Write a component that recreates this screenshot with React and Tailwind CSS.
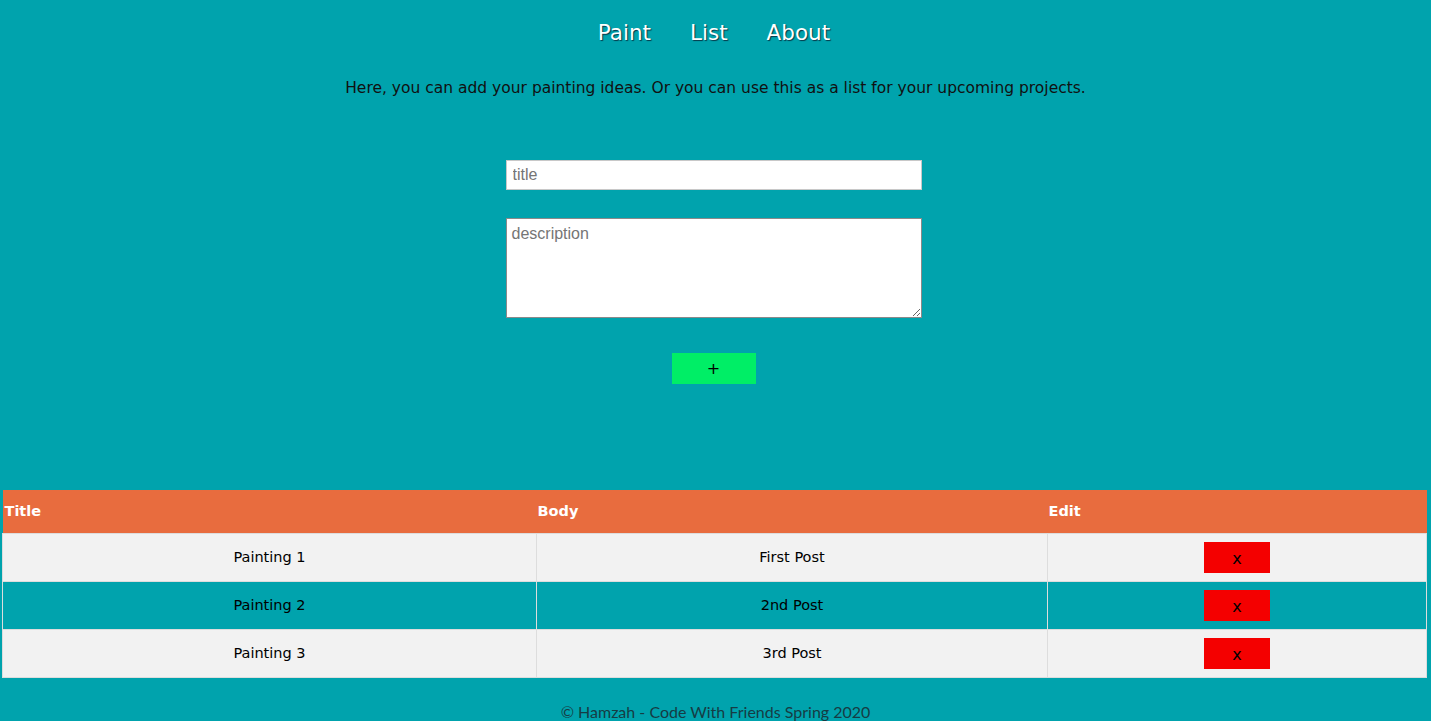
import { useState } from 'react'

const rows = [
  { title: 'Painting 1', body: 'First Post' },
  { title: 'Painting 2', body: '2nd Post' },
  { title: 'Painting 3', body: '3rd Post' },
]

export default function App() {
  const [title, setTitle] = useState('')
  const [description, setDescription] = useState('')

  return (
    <div className="min-h-[721px] bg-[#00a3ad] font-['DejaVu_Sans',sans-serif] text-black">
      <nav className="flex justify-center gap-[39px] pt-[18px] pr-[3px] text-[21.5px] text-white [text-shadow:1px_1px_1px_#063848]">
        <a href="#" className="leading-[30px]">Paint</a>
        <a href="#" className="leading-[30px]">List</a>
        <a href="#" className="leading-[30px]">About</a>
      </nav>

      <p className="mt-[29px] text-center text-[15.5px] leading-[22px] text-[#111]">
        Here, you can add your painting ideas. Or you can use this as a list for your upcoming projects.
      </p>

      <form className="mt-[61px] flex flex-col items-center pr-[4px] font-['Liberation_Sans',sans-serif]">
        <input
          value={title}
          onChange={(e) => setTitle(e.target.value)}
          placeholder="title"
          className="h-[30px] w-[416px] border border-[#c8c8c8] bg-white px-[6px] text-[16px] placeholder:text-[#757575] outline-none"
        />
        <textarea
          value={description}
          onChange={(e) => setDescription(e.target.value)}
          placeholder="description"
          className="mt-[28px] h-[100px] w-[416px] border border-[#8a8a8a] bg-white px-[5px] py-[3px] text-[16px] placeholder:text-[#757575] outline-none"
        />
        <button
          type="button"
          className="mt-[35px] h-[31px] w-[84px] bg-[#00ee66] text-[16px] font-['DejaVu_Sans',sans-serif]"
        >
          +
        </button>
      </form>

      <table className="ml-[2px] mt-[106px] w-[1425px] border-collapse text-[14.5px]">
        <thead>
          <tr className="h-[43px] bg-[#e86c3e] text-left text-white">
            <th className="w-[534px] pl-[2px] pt-[2px] font-bold">Title</th>
            <th className="w-[511px] pl-[1px] pt-[2px] font-bold">Body</th>
            <th className="pl-[1px] pt-[2px] font-bold">Edit</th>
          </tr>
        </thead>
        <tbody>
          {rows.map((row, i) => (
            <tr key={row.title} className={i % 2 === 1 ? 'h-[48px] bg-[#00a3ad]' : 'h-[48px] bg-[#f2f2f2]'}>
              <td className="border border-[#dddddd] pt-[2px] text-center">{row.title}</td>
              <td className="border border-[#dddddd] pt-[2px] text-center">{row.body}</td>
              <td className="border border-[#dddddd] text-center">
                <button type="button" className="h-[31px] w-[66px] bg-[#f40000] pt-[4px] text-[16px]">x</button>
              </td>
            </tr>
          ))}
        </tbody>
      </table>

      <footer className="mt-[24px] text-center font-['Lato',sans-serif] text-[16px] leading-[20px] text-[#163c44]">
        © Hamzah - Code With Friends Spring 2020
      </footer>
    </div>
  )
}
